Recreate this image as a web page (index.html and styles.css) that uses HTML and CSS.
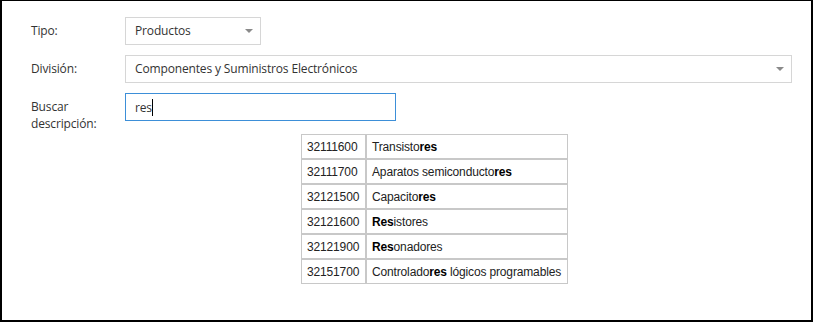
FILE: index.html
```html
<!DOCTYPE html>
<html lang="es">
<head>
<meta charset="utf-8">
<link rel="stylesheet" href="styles.css">
</head>
<body>
<div class="frame">
  <div class="form">
    <div class="row">
      <div class="label">Tipo:</div>
      <div class="select select-tipo">
        <span class="value">Productos</span>
        <span class="arrow"></span>
      </div>
    </div>
    <div class="row">
      <div class="label">División:</div>
      <div class="select select-div">
        <span class="value">Componentes y Suministros Electrónicos</span>
        <span class="arrow"></span>
      </div>
    </div>
    <div class="row row-last">
      <div class="label">Buscar descripción:</div>
      <div class="input"><span class="value">res</span><span class="caret"></span></div>
    </div>
    <div class="results-wrap">
      <table class="results">
        <colgroup><col class="c1"><col class="c2"></colgroup>
        <tr><td>32111600</td><td>Transisto<b>res</b></td></tr>
        <tr><td>32111700</td><td>Aparatos semiconducto<b>res</b></td></tr>
        <tr><td>32121500</td><td>Capacito<b>res</b></td></tr>
        <tr><td>32121600</td><td><b>Res</b>istores</td></tr>
        <tr><td>32121900</td><td><b>Res</b>onadores</td></tr>
        <tr><td>32151700</td><td>Controlado<b>res</b> lógicos programables</td></tr>
      </table>
    </div>
  </div>
</div>
</body>
</html>
```

FILE: styles.css
```css
html, body {
  margin: 0;
  padding: 0;
  background: #fff;
}

.frame {
  box-sizing: border-box;
  width: 813px;
  height: 322px;
  border: 2px solid #000;
  border-top-width: 1px;
  background: #fff;
}

.form {
  padding: 16px 0 0 29px;
  font-family: "Open Sans", sans-serif;
  font-size: 12px;
  letter-spacing: -0.15px;
  color: #333;
}

.row {
  display: flex;
  align-items: flex-start;
  margin-bottom: 10px;
}

.row-last {
  margin-bottom: 0;
}

.label {
  width: 80px;
  margin-right: 14px;
  padding-top: 5px;
  line-height: 17px;
}

.select {
  box-sizing: border-box;
  height: 28px;
  border: 1px solid #d6d6d6;
  display: flex;
  align-items: center;
  padding-left: 9px;
  padding-right: 7px;
  color: #333;
}

.select .value {
  flex: 1;
  line-height: 26px;
}

.select-tipo {
  width: 136px;
}

.select-div {
  width: 667px;
}

.arrow {
  width: 0;
  height: 0;
  border-left: 4px solid transparent;
  border-right: 4px solid transparent;
  border-top: 4px solid #8a8a8a;
}

.input {
  box-sizing: border-box;
  width: 271px;
  height: 28px;
  border: 1px solid #3d8fd8;
  display: flex;
  align-items: center;
  padding-left: 9px;
  color: #333;
}

.caret {
  display: inline-block;
  width: 1px;
  height: 17px;
  background: #000;
}

.results-wrap {
  padding-left: 270px;
  margin-top: 2px;
}

.results {
  border-collapse: separate;
  border-spacing: 0;
  table-layout: fixed;
  width: 267px;
  font-family: "Liberation Sans", Arial, sans-serif;
  font-size: 12px;
  letter-spacing: -0.15px;
  color: #222;
}

.results col.c1 {
  width: 65px;
}

.results col.c2 {
  width: 202px;
}

.results td {
  border: 1px solid #c8c8c8;
  height: 25px;
  padding: 0 5px;
  box-sizing: border-box;
  white-space: nowrap;
  overflow: hidden;
}

.results b {
  font-weight: bold;
  color: #000;
}
```
